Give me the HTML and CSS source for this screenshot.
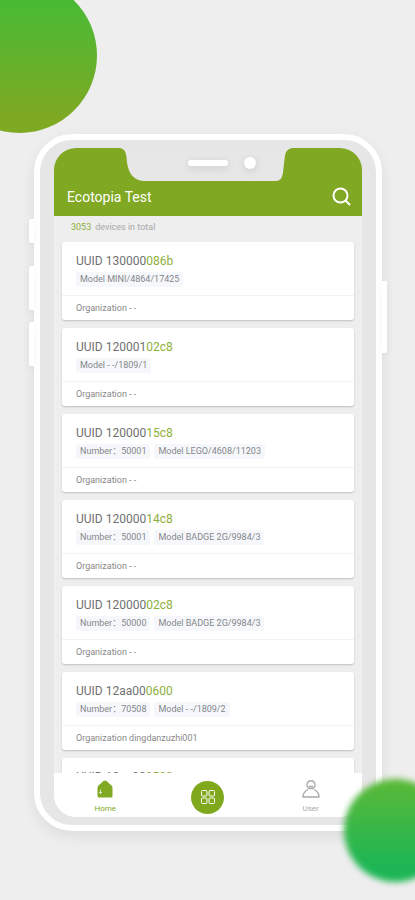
FILE: index.html
```html
<!DOCTYPE html>
<html lang="en">
<head>
<meta charset="utf-8">
<meta name="viewport" content="width=device-width, initial-scale=1">
<title>Ecotopia Test</title>
<link rel="stylesheet" href="styles.css">
</head>
<body>
<div class="orb orb-top"></div>
<div class="phone">
  <span class="key key-mute"></span>
  <span class="key key-up"></span>
  <span class="key key-down"></span>
  <span class="key key-power"></span>
  <div class="notch">
    <svg class="notch-shape" viewBox="0 0 164 34" preserveAspectRatio="none" aria-hidden="true"><path d="M0 0Q6 1 6.500 9C7 24 13 33 24 33H156Q162 33 163 25L165 8Q166 1 172 0Z" transform="scale(.953 1)"/></svg>
    <span class="speaker"></span>
    <span class="camera"></span>
  </div>
  <div class="screen">
    <header class="bar">
      <h1>Ecotopia Test</h1>
      <button class="search" type="button" aria-label="Search">
        <svg viewBox="0 0 20 20"><circle cx="8.500" cy="8.500" r="7"/><path d="M13.500 13.500L18 18"/></svg>
      </button>
    </header>
    <p class="count"><span class="green">3053</span><span>devices in total</span></p>
    <main class="list">
      <article class="card"><div class="info"><h2>UUID 130000<span class="green">086b</span></h2><div class="tags"><span>Model MINI/4864/17425</span></div></div><p class="org">Organization - -</p></article>
      <article class="card"><div class="info"><h2>UUID 120001<span class="green">02c8</span></h2><div class="tags"><span>Model - -/1809/1</span></div></div><p class="org">Organization - -</p></article>
      <article class="card"><div class="info"><h2>UUID 120000<span class="green">15c8</span></h2><div class="tags"><span>Number：50001</span><span>Model LEGO/4608/11203</span></div></div><p class="org">Organization - -</p></article>
      <article class="card"><div class="info"><h2>UUID 120000<span class="green">14c8</span></h2><div class="tags"><span>Number：50001</span><span>Model BADGE 2G/9984/3</span></div></div><p class="org">Organization - -</p></article>
      <article class="card"><div class="info"><h2>UUID 120000<span class="green">02c8</span></h2><div class="tags"><span>Number：50000</span><span>Model BADGE 2G/9984/3</span></div></div><p class="org">Organization - -</p></article>
      <article class="card"><div class="info"><h2>UUID 12aa00<span class="green">0600</span></h2><div class="tags"><span>Number：70508</span><span>Model - -/1809/2</span></div></div><p class="org">Organization dingdanzuzhi001</p></article>
      <article class="card"><div class="info"><h2>UUID 12aa00<span class="green">0500</span></h2></div></article>
    </main>
    <nav class="nav">
      <a class="tab active" href="#home">
        <svg viewBox="0 0 18 18"><path class="fill" d="M7.500 1Q9 0 10.500 1L15.500 5.500Q16.500 6.500 16.500 8V16Q16.500 17.500 15 17.500H3Q1.500 17.500 1.500 16V8Q1.500 6.500 2.500 5.500Z"/><path class="door" d="M4.500 9.500V14M3 12.500H6"/></svg>
        <span>Home</span>
      </a>
      <a class="apps" href="#apps" aria-label="Apps">
        <svg viewBox="0 0 16 16"><rect x="1.500" y="1.500" width="5.500" height="5.500" rx="1"/><rect x="9" y="1.500" width="5.500" height="5.500" rx="1"/><rect x="1.500" y="9" width="5.500" height="5.500" rx="1"/><rect x="9" y="9" width="5.500" height="5.500" rx="1"/></svg>
      </a>
      <a class="tab" href="#user">
        <svg viewBox="0 0 18 18"><path d="M7 1H11L13 3.500V6L11 8.500H7L5 6V3.500ZM7 6.500H11M6 9.500Q1 12 1 17H17Q17 12 12 9.500"/></svg>
        <span>User</span>
      </a>
    </nav>
  </div>
</div>
<div class="orb orb-bottom"></div>
</body>
</html>
```
FILE: styles.css
```css
* { box-sizing: border-box; }

html { overflow: hidden; }

body {
  position: relative;
  display: flex;
  height: 100vh;
  margin: 0;
  padding: 134px 33px 69px 34px;
  overflow: hidden;
  background: #eeeeee;
  font-family: Roboto, "Noto Sans CJK SC", sans-serif;
}

h1, h2, p { margin: 0; font-weight: 400; }

.green { color: #8db03c; }

/* Decorative circles */
.orb { position: absolute; border-radius: 50%; }

.orb-top {
  top: -22px;
  left: -58px;
  width: 155px;
  height: 155px;
  background: linear-gradient(#48ba34 15%, #7fa923 90%);
}

.orb-bottom {
  right: -32px;
  bottom: 18px;
  width: 103px;
  height: 103px;
  background: linear-gradient(#5cb936, #1eb655 85%);
  filter: blur(3px);
}

/* Phone body */
.phone {
  position: relative;
  display: flex;
  flex: 1;
  padding: 8px 14px;
  border: 6px solid #ffffff;
  border-radius: 38px;
  background: #e6e6e6;
  box-shadow: 0 5px 14px rgba(0, 0, 0, 0.08);
}

.key {
  position: absolute;
  left: -11px;
  width: 5px;
  border-radius: 2px 0 0 2px;
  background: #ffffff;
  box-shadow: 0 3px 8px rgba(0, 0, 0, 0.06);
}

.key-mute { top: 79px; height: 24px; }
.key-up { top: 126px; height: 44px; }
.key-down { top: 182px; height: 44px; }

.key-power {
  top: 141px;
  right: -11px;
  left: auto;
  height: 72px;
  border-radius: 0 2px 2px 0;
}

.notch {
  position: absolute;
  z-index: 1;
  top: 8px;
  left: 50%;
  display: flex;
  align-items: center;
  justify-content: flex-end;
  gap: 16px;
  width: 172px;
  height: 34px;
  margin-left: -88px;
  padding: 0 36px 4px 0;
}

.notch-shape {
  position: absolute;
  inset: 0;
  width: 100%;
  height: 100%;
  fill: #e7e7e7;
}

.speaker, .camera {
  position: relative;
  background: #ffffff;
  box-shadow: 0 2px 8px rgba(0, 0, 0, 0.12);
}

.speaker { width: 40px; height: 6px; border-radius: 3px; }
.camera { width: 12px; height: 12px; border-radius: 50%; }

/* Application */
.screen {
  display: flex;
  flex: 1;
  flex-direction: column;
  min-width: 0;
  overflow: hidden;
  border-radius: 22px;
  background: #eeeeee;
}

.bar {
  display: flex;
  align-items: flex-end;
  justify-content: space-between;
  height: 68px;
  padding: 0 10px 9px 13px;
  background: #80a823;
  color: #ffffff;
}

.bar h1 { font-size: 14px; line-height: 20px; }

.search {
  width: 20px;
  height: 20px;
  padding: 0;
  border: 0;
  background: none;
}

svg { display: block; }

.search svg {
  width: 20px;
  height: 20px;
  fill: none;
  stroke: #ffffff;
  stroke-width: 2;
}

.count {
  display: flex;
  gap: 4px;
  height: 26px;
  padding: 5px 17px;
  color: #a8a8a8;
  font-size: 9px;
  line-height: 12px;
}

.list {
  display: flex;
  flex: 1;
  flex-direction: column;
  gap: 8px;
  min-height: 0;
  padding: 0 8px;
  overflow: hidden;
}

.card {
  flex: none;
  height: 78px;
  border-radius: 3px;
  background: #ffffff;
  box-shadow: 0 1px 2px rgba(0, 0, 0, 0.2);
}

.info {
  height: 54px;
  padding: 11px 14px 0;
  border-bottom: 1px solid #f3f3f3;
}

.card h2 {
  color: #707070;
  font-size: 12px;
  line-height: 16px;
}

.tags { display: flex; gap: 4px; padding-top: 3px; }

.tags span {
  padding: 0 4px;
  border-radius: 2px;
  background: #f6f7fa;
  color: #84878b;
  font-size: 9px;
  line-height: 15px;
  white-space: nowrap;
}

.org {
  padding: 0 14px;
  color: #888888;
  font-size: 9px;
  line-height: 24px;
}

.nav {
  display: grid;
  grid-template-columns: repeat(3, 1fr);
  place-items: center;
  height: 44px;
  padding-top: 4px;
  background: #ffffff;
}

.tab {
  display: grid;
  justify-items: center;
  gap: 5px;
  color: #a8a8a8;
  font-size: 8px;
  line-height: 12px;
  text-decoration: none;
}

.tab svg {
  width: 18px;
  height: 18px;
  fill: none;
  stroke: currentColor;
  stroke-width: 1.3;
}

.active { color: #80aa24; }
.tab .fill { fill: currentColor; stroke: none; }
.tab .door { stroke: #dbe8bc; stroke-width: 1; }

.apps {
  display: grid;
  place-items: center;
  width: 33px;
  height: 33px;
  border-radius: 50%;
  background: #80a81d;
}

.apps svg {
  width: 16px;
  height: 16px;
  fill: none;
  stroke: #ffffff;
  stroke-width: 1;
}
```
